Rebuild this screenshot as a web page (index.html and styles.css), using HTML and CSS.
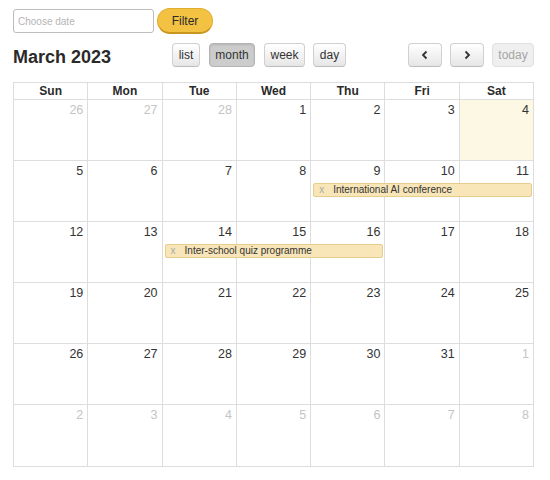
FILE: index.html
```html
<!DOCTYPE html>
<html>
<head>
<meta charset="utf-8">
<link rel="stylesheet" href="styles.css">
</head>
<body>
<div class="page">
  <div class="filter-row">
    <input class="date-input" type="text" placeholder="Choose date">
    <button class="filter-btn">Filter</button>
  </div>
  <div class="toolbar">
    <h2 class="title">March 2023</h2>
    <div class="views">
      <button class="btn w-list">list</button>
      <button class="btn w-month active">month</button>
      <button class="btn w-week">week</button>
      <button class="btn w-day">day</button>
    </div>
    <div class="nav">
      <button class="btn arrow"><svg width="10" height="10" viewBox="0 0 10 10"><path d="M6.5 1.5 L3 5 L6.5 8.5" fill="none" stroke="#333" stroke-width="1.8"/></svg></button>
      <button class="btn arrow"><svg width="10" height="10" viewBox="0 0 10 10"><path d="M3.5 1.5 L7 5 L3.5 8.5" fill="none" stroke="#333" stroke-width="1.8"/></svg></button>
      <button class="btn disabled">today</button>
    </div>
  </div>
  <div class="calendar">
    <div class="head">
      <div class="hcell">Sun</div><div class="hcell">Mon</div><div class="hcell">Tue</div><div class="hcell">Wed</div><div class="hcell">Thu</div><div class="hcell">Fri</div><div class="hcell">Sat</div>
    </div>
    <div class="week">
      <div class="day other">26</div><div class="day other">27</div><div class="day other">28</div><div class="day">1</div><div class="day">2</div><div class="day">3</div><div class="day today">4</div>
    </div>
    <div class="week">
      <div class="day">5</div><div class="day">6</div><div class="day">7</div><div class="day">8</div><div class="day">9</div><div class="day">10</div><div class="day">11</div>
      <div class="event ev-thu-sat"><span class="ex">x</span>International AI conference</div>
    </div>
    <div class="week">
      <div class="day">12</div><div class="day">13</div><div class="day">14</div><div class="day">15</div><div class="day">16</div><div class="day">17</div><div class="day">18</div>
      <div class="event ev-tue-thu"><span class="ex">x</span>Inter-school quiz programme</div>
    </div>
    <div class="week">
      <div class="day">19</div><div class="day">20</div><div class="day">21</div><div class="day">22</div><div class="day">23</div><div class="day">24</div><div class="day">25</div>
    </div>
    <div class="week">
      <div class="day">26</div><div class="day">27</div><div class="day">28</div><div class="day">29</div><div class="day">30</div><div class="day">31</div><div class="day other">1</div>
    </div>
    <div class="week last">
      <div class="day other">2</div><div class="day other">3</div><div class="day other">4</div><div class="day other">5</div><div class="day other">6</div><div class="day other">7</div><div class="day other">8</div>
    </div>
  </div>
</div>
</body>
</html>
```
FILE: styles.css
```css
* { box-sizing: border-box; }
html, body { margin: 0; padding: 0; background: #fff; }
body { font-family: "Liberation Sans", Arial, sans-serif; color: #333; }
.page { width: 550px; padding: 8px 16px 0 13px; }

.filter-row { display: flex; align-items: center; gap: 3px; height: 26px; }
.date-input {
  width: 141px; height: 24px; margin: 0;
  border: 1px solid #bdbdbd; border-radius: 3px;
  padding: 0 4px; font-family: "Liberation Sans", Arial, sans-serif; font-size: 10px;
  color: #333; outline: none;
}
.date-input::placeholder { color: #b5b5b5; }
.filter-btn {
  width: 56px; height: 26px; margin: 0; padding: 0;
  background: #f4c242; border: 1px solid #e2ad2c; border-bottom: 2px solid #c9961f;
  border-radius: 13px; font-family: "Liberation Sans", Arial, sans-serif;
  font-size: 12px; color: #2b2b2b;
}

.toolbar { display: flex; align-items: center; height: 24px; margin-top: 9px; }
.title { margin: 0; font-size: 18px; font-weight: bold; color: #2a2a2a; width: 159px; line-height: 24px; position: relative; top: 2px; }
.views { display: flex; gap: 9px; }
.nav { display: flex; gap: 8px; margin-left: auto; }
.btn {
  height: 24px; margin: 0; padding: 0;
  background: linear-gradient(#ffffff, #e6e6e6);
  border: 1px solid #d0d0d0; border-bottom-color: #bdbdbd; border-radius: 4px;
  font-family: "Liberation Sans", Arial, sans-serif; font-size: 12px; color: #333;
  display: flex; align-items: center; justify-content: center;
}
.w-list { width: 28px; }
.w-month { width: 46px; }
.w-week { width: 41px; }
.w-day { width: 33px; margin-left: -1px; }
.btn.active { background: #cccccc; border-color: #b3b3b3; box-shadow: inset 0 1px 2px rgba(0,0,0,0.12); }
.btn.arrow { width: 34px; }
.btn.disabled { width: 42px; color: #a5a5a5; background: #efefef; border-color: #e0e0e0; }

.calendar { margin-top: 15px; width: 521px; border: 1px solid #dddddd; border-right: none; }
.head { display: grid; grid-template-columns: repeat(7, 1fr); height: 17px; }
.hcell { border-right: 1px solid #dddddd; border-bottom: 1px solid #dddddd; text-align: center; font-size: 12px; font-weight: bold; line-height: 16px; color: #2a2a2a; }
.week { display: grid; grid-template-columns: repeat(7, 1fr); grid-template-rows: 22px 14px 1fr; height: 61px; }
.day {
  grid-row: 1 / -1; border-right: 1px solid #dddddd; border-bottom: 1px solid #dddddd;
  text-align: right; padding: 3px 4px 0 0; font-size: 12.5px; line-height: 14px; color: #333;
}
.week.last .day { border-bottom: none; }
.day:nth-child(1) { grid-column: 1; }
.day:nth-child(2) { grid-column: 2; }
.day:nth-child(3) { grid-column: 3; }
.day:nth-child(4) { grid-column: 4; }
.day:nth-child(5) { grid-column: 5; }
.day:nth-child(6) { grid-column: 6; }
.day:nth-child(7) { grid-column: 7; }
.day.other { color: #c4c4c4; }
.day.today { background: #fcf8e3; }

.event {
  grid-row: 2; height: 14px; margin: 0 2px 0 2px;
  background: #f8e6b9; border: 1px solid #e6cd8c; border-radius: 2px;
  font-size: 10px; line-height: 12px; color: #333; padding-left: 5px; white-space: nowrap; overflow: hidden;
}
.ex { color: #a8a8a8; margin-right: 9px; }
.ev-thu-sat { grid-column: 5 / 8; }
.ev-tue-thu { grid-column: 3 / 6; }
```
